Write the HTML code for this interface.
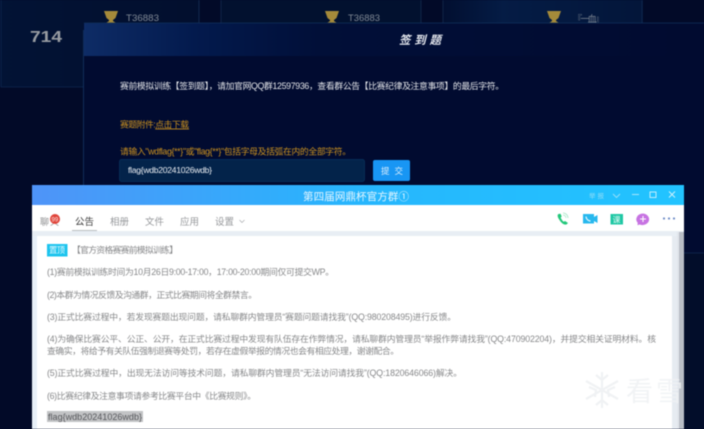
<!DOCTYPE html>
<html lang="zh"><head><meta charset="utf-8"><style>
html,body{margin:0;padding:0;width:704px;height:429px;overflow:hidden;background:#02092b}
svg{display:block;filter:blur(.4px)}
text{font-family:"Liberation Sans","Noto Sans CJK SC",sans-serif}
</style></head><body>
<svg width="704" height="429" viewBox="0 0 704 429" xmlns="http://www.w3.org/2000/svg">
<defs>
<linearGradient id="hd" x1="0" x2="1" y1="0" y2="0"><stop offset="0" stop-color="#0e2c66"/><stop offset=".18" stop-color="#031a4d"/><stop offset=".38" stop-color="#010f38"/><stop offset="1" stop-color="#010b30"/></linearGradient>
<linearGradient id="tb" x1="0" x2="1" y1="0" y2="0"><stop offset="0" stop-color="#4f94f8"/><stop offset=".5" stop-color="#27b6fd"/><stop offset="1" stop-color="#22c4ff"/></linearGradient>
<linearGradient id="card" x1="0" x2="1" y1="0" y2="0"><stop offset="0" stop-color="#021335"/><stop offset="1" stop-color="#020f2e"/></linearGradient>
<linearGradient id="card2" x1="0" x2="1" y1="0" y2="0"><stop offset="0" stop-color="#020f30"/><stop offset=".3" stop-color="#051c45"/><stop offset="1" stop-color="#03163a"/></linearGradient>
</defs>
<rect width="704" height="429" fill="#020a28"/>
<rect x="0" y="0" width="199" height="87" fill="url(#card)"/>
<rect x="1" y="-2" width="198" height="89" fill="none" stroke="#112a52" stroke-width=".7"/>
<rect x="221" y="0" width="200" height="23" fill="#02112f"/>
<rect x="443" y="0" width="200" height="23" fill="url(#card2)"/>
<path d="M221 0V23M421 0V23M443 0V23M642 0V23M199 0V23" stroke="#142e55" stroke-width=".7"/>
<text x="30" y="42" font-size="16" font-weight="700" fill="#989ca2" textLength="32" lengthAdjust="spacingAndGlyphs">714</text>
<g fill="#a58a3a"><path d="M104 11h14l-2.500 7-2.500 2v1l3 2v1h-10v-1l3-2v-1l-2.500-2z"/><path d="M325 11h14l-2.500 7-2.500 2v1l3 2v1h-10v-1l3-2v-1l-2.500-2z"/><path d="M547 11h14l-2.500 7-2.500 2v1l3 2v1h-10v-1l3-2v-1l-2.500-2z"/></g>
<text x="126" y="21" font-size="8.800" fill="#7f8894" textLength="33" lengthAdjust="spacingAndGlyphs">T36883</text>
<text x="348" y="21" font-size="8.800" fill="#7f8894" textLength="32" lengthAdjust="spacingAndGlyphs">T36883</text>
<text x="573" y="22" font-size="9" fill="#7f8894" textLength="31">『一血』</text>

<rect x="83.500" y="23" width="630" height="420" rx="2" fill="#010b30"/>
<rect x="84" y="23" width="620" height="33" fill="url(#hd)"/>
<path d="M84 23H704" stroke="#10305c" stroke-width=".8"/>
<path d="M83.500 30V190" stroke="#183a6c" stroke-width=".7"/>
<text x="399" y="44" font-size="11.500" font-weight="700" font-style="italic" fill="#e6e9ef" textLength="42">签到题</text>
<text x="120" y="89" font-size="8.800" fill="#e4e6ea" textLength="384">赛前模拟训练【签到题】，请加官网QQ群12597936，查看群公告【比赛纪律及注意事项】的最后字符。</text>
<text x="120" y="127.500" font-size="8.800" fill="#c9901f" textLength="69">赛题附件:<tspan text-decoration="underline">点击下载</tspan></text>
<text x="120" y="154.500" font-size="8.800" fill="#c9901f" textLength="231">请输入"wdflag{**}"或"flag{**}"包括字母及括弧在内的全部字符。</text>
<rect x="119.500" y="159.500" width="245" height="22" rx="2" fill="#03234a" stroke="#0a3560" stroke-width=".7"/>
<text x="128" y="173" font-size="8.600" fill="#e9edf2" textLength="84">flag{wdb20241026wdb}</text>
<rect x="373" y="160" width="37" height="21" rx="2" fill="#1896f4"/>
<text x="381" y="174" font-size="8.500" fill="#d7ecfc" textLength="22">提 交</text>

<rect x="684" y="253" width="20" height="176" fill="#020d2a"/>
<path d="M684 253H704" stroke="#122b52" stroke-width=".7"/>

<rect x="32" y="185" width="652" height="244" fill="#fff"/>
<rect x="32" y="185" width="652" height="20" fill="url(#tb)"/>
<text x="303" y="200" font-size="10.500" fill="#e6f6ff" textLength="106">第四届网鼎杯官方群①</text>
<text x="589" y="198" font-size="6.500" fill="#8fdcf6" textLength="15">举报</text>
<path d="M613 194l3.500 3.500 3.500-3.500" fill="none" stroke="#9be0f8" stroke-width=".9"/>
<path d="M632 194.500h7" stroke="#b8e9fb" stroke-width=".9"/>
<rect x="650" y="192" width="6" height="5.500" fill="none" stroke="#d2f1fc" stroke-width=".9"/>
<path d="M669 191.500l6 6M675 191.500l-6 6" stroke="#d2f1fc" stroke-width=".9"/>

<text x="40" y="225" font-size="9" fill="#8e8f91" textLength="19">聊天</text>
<circle cx="55" cy="219" r="5" fill="#e0443a"/>
<text x="51.500" y="221.500" font-size="6" fill="#fde9e6">99</text>
<text x="75" y="225" font-size="9.500" fill="#3c3c3c" textLength="19">公告</text>
<path d="M72 230.500h25" stroke="#a5a8ac" stroke-width=".8"/>
<text x="110" y="225" font-size="9.500" fill="#96989b" textLength="19">相册</text>
<text x="145" y="225" font-size="9.500" fill="#96989b" textLength="19">文件</text>
<text x="180" y="225" font-size="9.500" fill="#96989b" textLength="19">应用</text>
<text x="215" y="225" font-size="9.500" fill="#96989b" textLength="19">设置</text>
<path d="M239.500 220l2.500 2.500 2.500-2.500" fill="none" stroke="#a8aaad" stroke-width=".7"/>

<path d="M558.500 214c-1.500 1-1 3 1 6 2 3 4 5 7 4.500l1.500-1.500-3-2-1.300 .8c-1.200-.8-2.500-2.800-3-4.300l1-1-1.200-2.800z" fill="#22c77a"/>
<path d="M563 215a3 3 0 0 1 3 3M563 213a5 5 0 0 1 5 5" fill="none" stroke="#a6e6c7" stroke-width=".8"/>
<path d="M583 214h11v3l3.500-2v8l-3.500-2v2.500h-11z" fill="#27b8ee"/>
<path d="M586 216.500c0 2 2 4.500 4.500 4.500" fill="none" stroke="#e9f8ff" stroke-width="1.200"/>
<rect x="610.500" y="214" width="12.500" height="10.500" fill="#1fc7a4"/>
<text x="612.500" y="222.500" font-size="8" fill="#dffaf3">课</text>
<path d="M643 213.500a6.700 5.800 0 1 1-3.500 11l-2 .8 .2-2.500a6.700 5.800 0 0 1 5.300-9.300z" fill="#c773e2"/>
<path d="M643 216v6M640 219h6" stroke="#fff" stroke-width="1.100"/>
<g fill="#6e8cc6"><circle cx="664" cy="218.500" r="1.100"/><circle cx="669" cy="218.500" r="1.100"/><circle cx="674" cy="218.500" r="1.100"/></g>

<rect x="32" y="231" width="652" height="5" fill="#e8eef4"/>
<rect x="32" y="236" width="5" height="193" fill="#e8f0f8"/>
<rect x="672" y="236" width="5" height="193" fill="#e6ebf1"/>
<rect x="679" y="232" width="5" height="197" fill="#b9bec6"/>
<rect x="677" y="232" width="2" height="197" fill="#e2e6ec"/>

<rect x="47" y="244" width="20.500" height="12.500" fill="#1cc4ee"/>
<text x="49" y="253" font-size="8.300" fill="#e0f8ff" textLength="16">置顶</text>
<text x="72" y="253" font-size="8.800" fill="#858688" textLength="106">【官方资格赛赛前模拟训练】</text>
<g font-size="8.800" fill="#87888a">
<text x="47" y="275" textLength="287">(1)赛前模拟训练时间为10月26日9:00-17:00，17:00-20:00期间仅可提交WP。</text>
<text x="47" y="298" textLength="210">(2)本群为情况反馈及沟通群，正式比赛期间将全群禁言。</text>
<text x="47" y="320" textLength="409">(3)正式比赛过程中，若发现赛题出现问题，请私聊群内管理员“赛题问题请找我”(QQ:980208495)进行反馈。</text>
<text x="47" y="342" textLength="609">(4)为确保比赛公平、公正、公开，在正式比赛过程中发现有队伍存在作弊情况，请私聊群内管理员“举报作弊请找我”(QQ:470902204)，并提交相关证明材料。核</text>
<text x="47" y="354" textLength="352">查确实，将给予有关队伍强制退赛等处罚，若存在虚假举报的情况也会有相应处理，谢谢配合。</text>
<text x="47" y="376" textLength="415">(5)正式比赛过程中，出现无法访问等技术问题，请私聊群内管理员“无法访问请找我”(QQ:1820646066)解决。</text>
<text x="47" y="399" textLength="209">(6)比赛纪律及注意事项请参考比赛平台中《比赛规则》。</text>
</g>
<rect x="47" y="411" width="96" height="11" fill="#c2c3c5"/>
<text x="48" y="420" font-size="9" fill="#55565a" textLength="94">flag{wdb20241026wdb}</text>

<g stroke="#f0f2f4" stroke-width="2.200" fill="none">
<path d="M602 372v36M586 381l32 18M618 381l-32 18M596 375l6 5 6-5M596 405l6-5 6 5M589 387l7 3-1 7M615 387l-7 3 1 7"/>
</g>
<text x="626" y="401" font-size="27" fill="#f0f2f4" opacity=".9">看</text>
<text x="656" y="401" font-size="27" fill="#f0f2f4" opacity=".8">雪</text>
</svg>
</body></html>
